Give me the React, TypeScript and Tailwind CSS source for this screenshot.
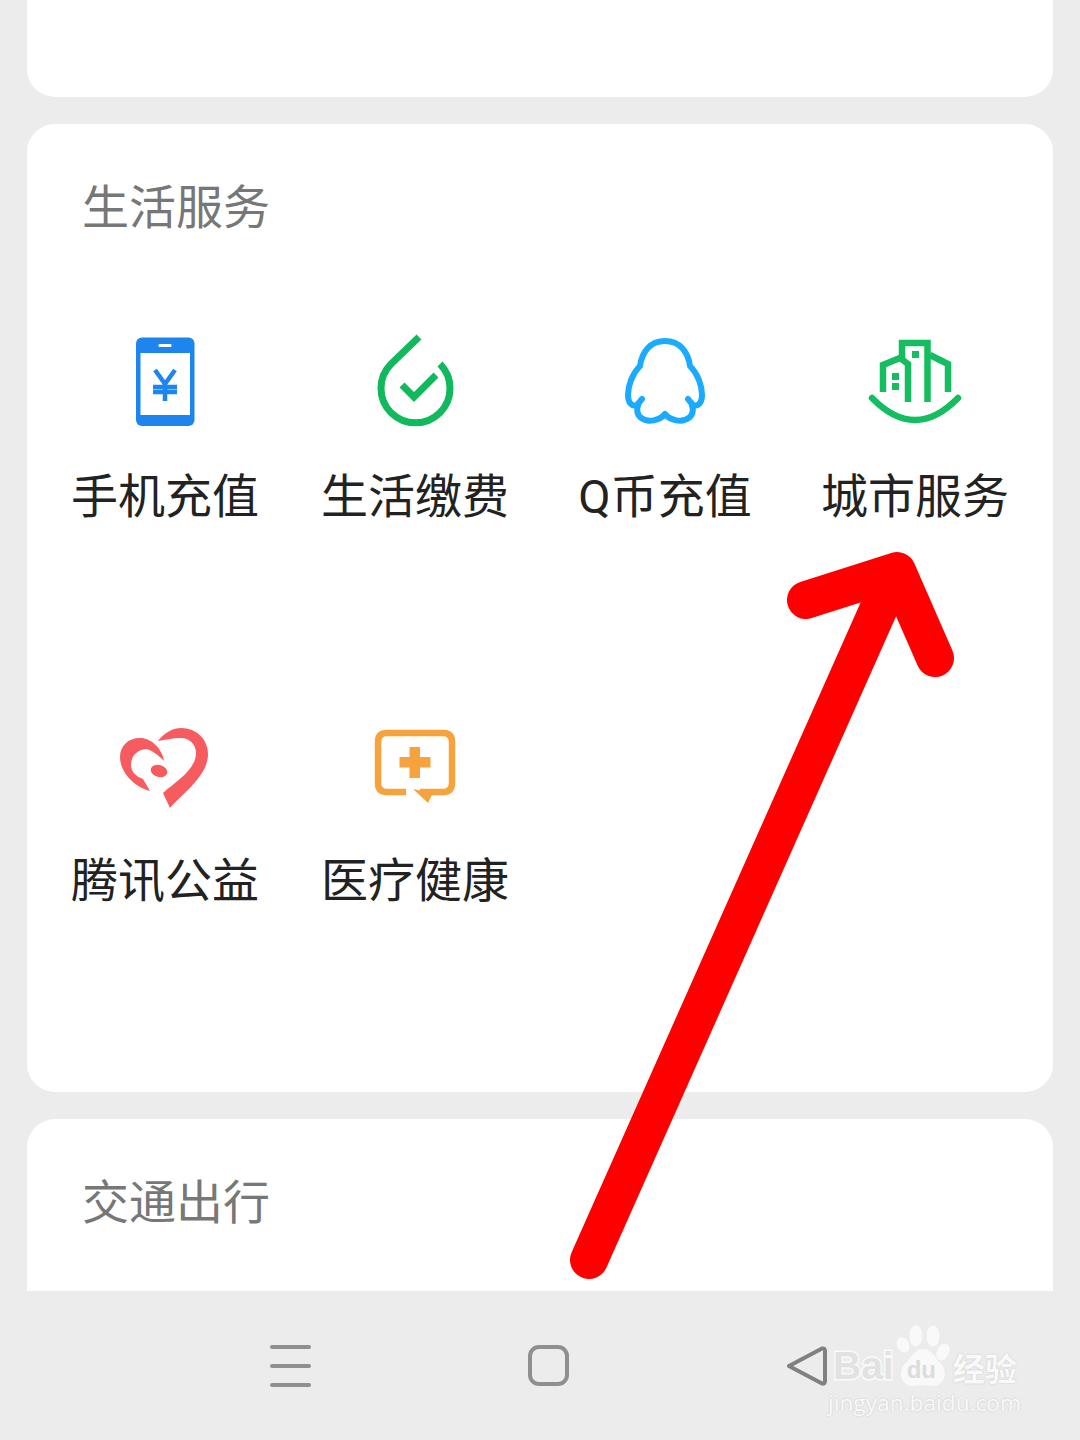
const FONT = "font-['Roboto','Noto_Sans_CJK_SC',sans-serif]";

function PhoneIcon() {
  return (
    <svg viewBox="115 332 100 100" className="w-[100px] h-[100px]">
      <rect x="136" y="337.500" width="58.500" height="88.500" rx="6" fill="#1f85ee" />
      <rect x="140.500" y="353" width="49.500" height="62" fill="#fff" />
      <rect x="158.500" y="344" width="13" height="3" rx="1" fill="#fff" />
      <path d="M155 370 L165 384 L175 370 M153 387 H177 M153 392 H177 M165 384 V401" fill="none" stroke="#1f85ee" strokeWidth="4.500" />
    </svg>
  );
}

function DropIcon() {
  return (
    <svg viewBox="365 332 100 100" className="w-[100px] h-[100px]">
      <path d="M419 337 L391 364 A34.500 34.500 0 1 0 440 364" fill="none" stroke="#10b95c" strokeWidth="7" />
      <path d="M402 385 L414 397 L436 375" fill="none" stroke="#10b95c" strokeWidth="7" />
    </svg>
  );
}

function QQIcon() {
  return (
    <svg viewBox="615 332 100 100" className="w-[100px] h-[100px]">
      <path
        d="M665 341 C650 341 642 352 640 366 C632 374 628 386 628 395 C628 403 632 407 637 405 L642 399 C636 405 636 413 640 417 C648 424 660 420 665 414 C670 420 682 424 690 417 C694 413 694 405 688 399 L693 405 C698 407 702 403 702 395 C702 386 698 374 690 366 C688 352 680 341 665 341 Z"
        fill="none"
        stroke="#1aabff"
        strokeWidth="6"
        strokeLinejoin="round"
      />
    </svg>
  );
}

function CityIcon() {
  return (
    <svg viewBox="865 332 100 100" className="w-[100px] h-[100px]">
      <g fill="none" stroke="#14bd5f" strokeWidth="6.500">
        <path d="M883 392 V365 L900 358 L908 364 V402" />
        <path d="M902 358 V343 H927.500 V402" />
        <path d="M930 355 L948 364 V392" />
        <path d="M872 398 Q915 442 958 398" strokeLinecap="round" />
      </g>
      <g fill="#14bd5f">
        <rect x="892" y="373" width="7" height="7" />
        <rect x="892" y="383" width="7" height="7" />
        <rect x="912" y="351" width="7" height="7" />
      </g>
    </svg>
  );
}

function HeartIcon() {
  return (
    <svg viewBox="115 716 100 100" className="w-[100px] h-[100px]">
      <g fill="#f65c5f">
        <path d="M158 741 C165 732 173 728 181 728 C197 728 208 740 208 754 C208 776 183 793 170 808 L163 793 C175 782 196 770 196 753 C196 745 190 738 181 738 C172 738 165 740 158 741 Z" />
        <path d="M164 761 C162 748 151 738 140 738 C128 738 120 746 120 757 C120 773 135 787 150 791 L143 779 C135 776 131 771 131 765 C131 756 137 750 146 749 C152 750 158 755 164 761 Z" />
        <ellipse cx="159" cy="771" rx="8.500" ry="6" transform="rotate(15 159 771)" />
      </g>
    </svg>
  );
}

function MedicalIcon() {
  return (
    <svg viewBox="365 716 100 100" className="w-[100px] h-[100px]">
      <path d="M406 792 H387 Q378 792 378 783 V742 Q378 733 387 733 H443 Q452 733 452 742 V783 Q452 792 443 792 H420" fill="none" stroke="#f6a33e" strokeWidth="6.500" />
      <polygon points="413,789 433,793 428,803" fill="#f6a33e" />
      <rect x="399.500" y="757" width="31" height="10.500" fill="#f6a33e" />
      <rect x="409.500" y="747" width="10.500" height="31" fill="#f6a33e" />
    </svg>
  );
}

const ROWS = [
  [
    { icon: <PhoneIcon />, label: "手机充值" },
    { icon: <DropIcon />, label: "生活缴费" },
    { icon: <QQIcon />, label: "Q币充值" },
    { icon: <CityIcon />, label: "城市服务" },
  ],
  [
    { icon: <HeartIcon />, label: "腾讯公益" },
    { icon: <MedicalIcon />, label: "医疗健康" },
  ],
];

function ServiceCell({ icon, label }: { icon: React.ReactNode; label: string }) {
  return (
    <div className="flex flex-col items-center">
      {icon}
      <span className="mt-[31px] text-[47px] leading-[68px] text-[#222] whitespace-nowrap">{label}</span>
    </div>
  );
}

function Watermark() {
  return (
    <div className="absolute left-[828px] top-[1325px] w-[200px] flex flex-col text-[#f9f9f9]">
      <div className="flex items-end h-[62px]">
        <span className="ml-[5px] mb-[-2px] text-[39px] leading-[46px] font-bold font-['Liberation_Sans',sans-serif] text-[#e2e2e2] [-webkit-text-stroke:3px_#fafafa] [paint-order:stroke_fill]">Bai</span>
        <div className="relative ml-[2px] w-[54px] h-[62px]">
          <svg viewBox="0 0 54 62" className="w-[54px] h-[62px]">
            <g fill="#f9f9f9">
              <ellipse cx="7" cy="20" rx="6" ry="8" transform="rotate(-25 7 20)" />
              <ellipse cx="20" cy="11" rx="6.500" ry="10.500" />
              <ellipse cx="37" cy="11" rx="6.500" ry="10.500" />
              <ellipse cx="47" cy="27" rx="6" ry="9" transform="rotate(25 47 27)" />
              <path d="M27 24 C36 24 38 32 46 40 C53 50 46 62 36 61 C30 60 24 60 18 61 C7 62 1 50 8 40 C16 32 18 24 27 24 Z" />
            </g>
          </svg>
          <span className="absolute left-[11px] top-[33px] text-[24px] leading-[24px] font-bold font-['Liberation_Sans',sans-serif] text-[#dcdcdc]">du</span>
        </div>
        <span className="ml-[3px] mb-[-3px] text-[32px] leading-[46px] font-bold whitespace-nowrap font-['Noto_Sans_CJK_SC',sans-serif] [text-shadow:0_0_2px_#c4c4c4]">经验</span>
      </div>
      <span className="mt-[1px] text-[22.700px] leading-[30px] font-['Open_Sans',sans-serif] whitespace-nowrap [text-shadow:0_0_2px_#c4c4c4]">jingyan.baidu.com</span>
    </div>
  );
}

function Arrow() {
  return (
    <svg viewBox="0 0 1080 1440" className="absolute inset-0 w-[1080px] h-[1440px] pointer-events-none">
      <path
        d="M589 1260 L895 572 M806 600 L897 571 L935 658"
        fill="none"
        stroke="#ff0000"
        strokeWidth="38"
        strokeLinecap="round"
        strokeLinejoin="round"
      />
    </svg>
  );
}

export default function App() {
  return (
    <div className={`relative w-[1080px] h-[1440px] overflow-hidden bg-[#ececec] flex flex-col ${FONT}`}>
      <div className="flex flex-col flex-1 px-[27px]">
        {/* Previous card, cut off by the top edge */}
        <div className="h-[97px] bg-white rounded-b-[28px]" />

        {/* 生活服务 */}
        <section className="mt-[27px] h-[968px] bg-white rounded-[28px] px-[13px]">
          <h2 className="pl-[42px] pt-[51px] text-[47px] leading-[66px] text-[#777]">生活服务</h2>
          <div className="mt-[91px] flex flex-col">
            {ROWS.map((row) => (
              <div key={row[0].label} className="grid grid-cols-4 h-[384px]">
                {row.map((item) => (
                  <ServiceCell key={item.label} icon={item.icon} label={item.label} />
                ))}
              </div>
            ))}
          </div>
        </section>

        {/* 交通出行 */}
        <section className="mt-[27px] flex-1 bg-white rounded-t-[28px] px-[55px]">
          <h2 className="pt-[51px] text-[47px] leading-[66px] text-[#777]">交通出行</h2>
        </section>
      </div>

      {/* Navigation bar */}
      <nav className="h-[149px] flex items-center pl-[270px] bg-[#ececec]">
        <div className="w-[41px] flex flex-col gap-[15px]">
          <div className="h-[4px] rounded-full bg-[#8f8f8f]" />
          <div className="h-[4px] rounded-full bg-[#8f8f8f]" />
          <div className="h-[4px] rounded-full bg-[#8f8f8f]" />
        </div>
        <div className="ml-[217px] w-[41px] h-[41px] rounded-[11px] border-[4px] border-[#8f8f8f]" />
        <svg viewBox="0 0 40 40" className="ml-[218px] w-[40px] h-[40px]">
          <path d="M2 20 L35 2.500 Q38 2 38 5 V35 Q38 38 35 37.500 Z" fill="none" stroke="#808080" strokeWidth="4" strokeLinejoin="round" />
        </svg>
      </nav>

      <Arrow />
      <Watermark />
    </div>
  );
}
